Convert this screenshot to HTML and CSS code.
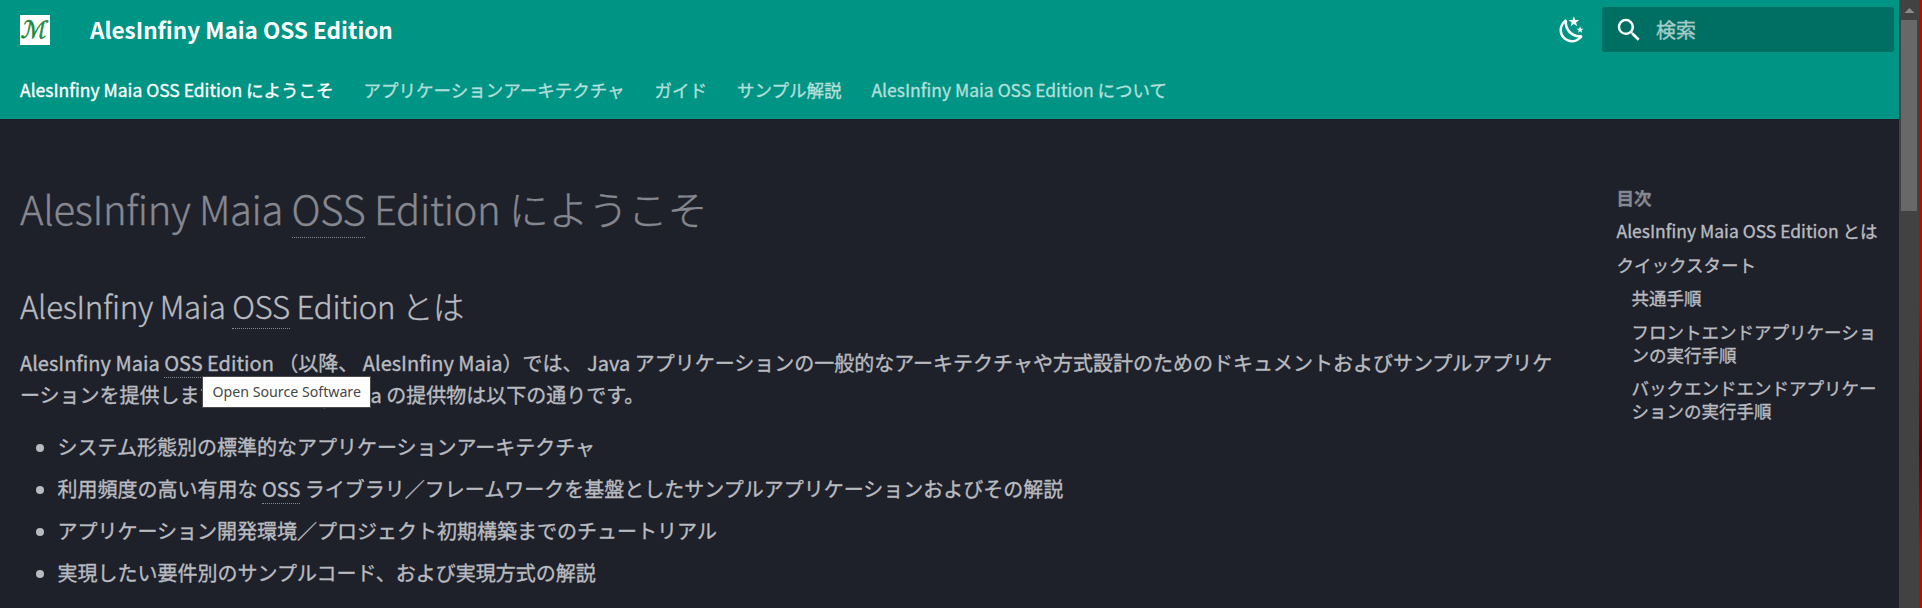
FILE: index.html
```html
<!DOCTYPE html>
<html lang="ja">
<head>
<meta charset="utf-8">
<title>AlesInfiny Maia OSS Edition</title>
<link rel="stylesheet" href="styles.css">
</head>
<body>
<div class="window">
  <div class="page">
    <header class="header">
      <div class="header-bar">
        <a class="logo"><span class="logo-mark">ℳ</span></a>
        <div class="site-title">AlesInfiny Maia OSS Edition</div>
        <svg class="icon palette-icon" viewBox="0 0 24 24"><path d="m17.75 4.09-2.53 1.94.91 3.06-2.63-1.81-2.63 1.81.91-3.06-2.53-1.94L12.44 4l1.06-3 1.06 3 3.19.09m3.5 6.91-1.64 1.25.59 1.98-1.7-1.17-1.7 1.17.59-1.98L15.75 11l2.06-.05L18.5 9l.69 1.95 2.06.05m-2.28 4.95c.83-.08 1.72 1.1 1.19 1.85-.32.45-.66.87-1.08 1.27C15.17 23 8.84 23 4.94 19.07c-3.91-3.9-3.91-10.24 0-14.14.4-.4.82-.76 1.27-1.08.75-.53 1.93.36 1.85 1.19-.27 2.86.69 5.83 2.89 8.02a9.96 9.96 0 0 0 8.02 2.89m-1.64 2.02a12.08 12.08 0 0 1-7.8-3.47c-2.17-2.19-3.33-5-3.49-7.82-2.81 3.14-2.7 7.96.31 10.98 3.02 3.01 7.84 3.12 10.98.31Z"/></svg>
        <div class="search">
          <svg class="icon" viewBox="0 0 24 24"><path d="M9.5 3A6.5 6.5 0 0 1 16 9.5c0 1.61-.59 3.09-1.56 4.23l.27.27h.79l5 5-1.5 1.5-5-5v-.79l-.27-.27A6.516 6.516 0 0 1 9.5 16 6.5 6.5 0 0 1 3 9.5 6.5 6.5 0 0 1 9.5 3m0 2C7 5 5 7 5 9.5S7 14 9.5 14 14 12 14 9.5 12 5 9.5 5Z"/></svg>
          <span class="search-label">検索</span>
        </div>
      </div>
      <nav class="tabs">
        <a class="tab tab-active">AlesInfiny Maia OSS Edition にようこそ</a>
        <a class="tab">アプリケーションアーキテクチャ</a>
        <a class="tab">ガイド</a>
        <a class="tab">サンプル解説</a>
        <a class="tab">AlesInfiny Maia OSS Edition について</a>
      </nav>
    </header>
    <div class="main">
      <article class="article">
        <h1>AlesInfiny Maia <abbr>OSS</abbr> Edition にようこそ</h1>
        <h2>AlesInfiny Maia <abbr>OSS</abbr> Edition とは</h2>
        <p>AlesInfiny Maia <abbr class="hinted">OSS<span class="tooltip">Open Source Software</span></abbr> Edition （以降、 AlesInfiny Maia）では、 Java アプリケーションの一般的なアーキテクチャや方式設計のためのドキュメントおよびサンプルアプリケーションを提供します。 AlesInfiny Maia の提供物は以下の通りです。</p>
        <ul>
          <li>システム形態別の標準的なアプリケーションアーキテクチャ</li>
          <li>利用頻度の高い有用な <abbr>OSS</abbr> ライブラリ／フレームワークを基盤としたサンプルアプリケーションおよびその解説</li>
          <li>アプリケーション開発環境／プロジェクト初期構築までのチュートリアル</li>
          <li>実現したい要件別のサンプルコード、および実現方式の解説</li>
        </ul>
      </article>
      <nav class="toc">
        <div class="toc-title">目次</div>
        <a class="toc-link">AlesInfiny Maia OSS Edition とは</a>
        <a class="toc-link">クイックスタート</a>
        <div class="toc-sub">
          <a class="toc-link">共通手順</a>
          <a class="toc-link">フロントエンドアプリケーションの実行手順</a>
          <a class="toc-link">バックエンドエンドアプリケーションの実行手順</a>
        </div>
      </nav>
    </div>
  </div>
  <div class="scrollbar">
    <svg class="scroll-arrow" viewBox="0 0 16 20"><path d="M3.5 13 8.5 8l5 5Z"/></svg>
    <div class="scroll-thumb"></div>
  </div>
  <div class="edge"></div>
</div>
</body>
</html>
```

FILE: styles.css
```css
* { box-sizing: border-box; }

body {
  margin: 0;
  overflow: hidden;
  background: #1e2129;
  color: #b9bbc1;
  font-family: "Noto Sans CJK JP", "Noto Sans", sans-serif;
  font-size: 20px;
  line-height: 1.6;
  -webkit-text-stroke: .35px;
}

.window { display: flex; height: 608px; }
.page { width: 1899px; overflow: hidden; }

.header { height: 119px; background: #009485; color: #fff; }
.header-bar { display: flex; align-items: center; height: 59px; padding: 0 5px 0 20px; }
.logo {
  display: flex;
  justify-content: center;
  width: 30px;
  height: 30px;
  background: #fff;
  color: #1f8a3b;
  font: 24px/30px "DejaVu Serif", "DejaVu Sans", serif;
  -webkit-text-stroke: .6px;
  overflow: hidden;
}
.logo-mark { transform: skewX(-12deg); }
.site-title { flex: 1; margin-left: 40px; padding-bottom: 2px; font-size: 22.5px; font-weight: 700; line-height: 58px; -webkit-text-stroke: 0; }
.icon { width: 30px; height: 30px; fill: #fff; }
.palette-icon { margin-right: 15.5px; }
.search {
  display: flex;
  align-items: center;
  gap: 12.5px;
  width: 292px;
  height: 45px;
  padding-left: 11.5px;
  border-radius: 2.5px;
  background: #006f63;
}
.search-label { color: #a6ccc7; font-size: 20px; }

.tabs { display: flex; gap: 30px; padding: 17px 20px 0; font-size: 17.5px; line-height: 28px; }
.tab { color: #b2dfda; white-space: nowrap; }
.tab-active { color: #fff; }

.main { display: flex; padding-top: 62.5px; }
.article { width: 1566.5px; padding-left: 20px; }

h1 { margin: 0 0 50px; color: #868891; font-size: 40px; font-weight: 300; letter-spacing: -.0085em; line-height: 1.3; }
h2 { margin: 0 0 20px; font-size: 31.25px; font-weight: 300; letter-spacing: -.0085em; line-height: 1.4; }
p { margin: 0 0 20px; line-break: loose; }
abbr { border-bottom: 1px dotted #868891; }
ul { margin: 0 0 0 12.5px; padding: 0; }
li { margin: 0 0 10px 25px; }

.hinted { position: relative; }
.tooltip {
  position: absolute;
  left: 38px;
  top: 28px;
  width: 169px;
  height: 32px;
  border: 1px solid #4a4a4a;
  background: #fff;
  color: #474747;
  font: 14.2px/29px "Noto Sans", sans-serif;
  -webkit-text-stroke: 0;
  text-align: center;
  white-space: nowrap;
}

.toc { width: 262px; margin: 5px 0 0 50px; font-size: 17.5px; line-height: 1.3; line-break: loose; }
.toc-title { color: #868891; font-weight: 700; }
.toc-link { display: block; margin-top: 10.9px; }
.toc-sub { padding-left: 15px; }

.scrollbar { width: 20px; padding-left: 2px; background: #424242; }
.scroll-arrow { display: block; width: 16px; height: 20px; fill: #8a8a8a; }
.scroll-thumb { width: 16px; height: 191px; background: #686868; }
.edge { width: 3px; background: linear-gradient(#c00800, #c00800 50%, #600 74%, #c00800 90%); }
```
